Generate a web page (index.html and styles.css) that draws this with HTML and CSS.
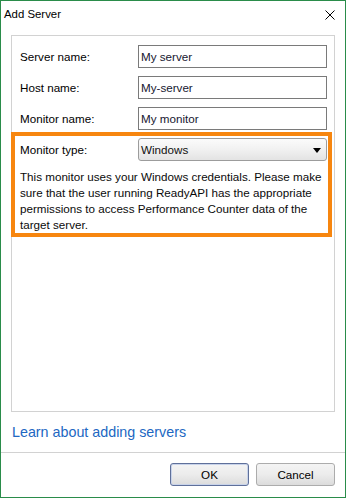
FILE: index.html
```html
<!DOCTYPE html>
<html>
<head>
<meta charset="utf-8">
<link rel="stylesheet" href="styles.css">
</head>
<body>
<div class="window">
  <div class="titlebar">
    <span class="title">Add Server</span>
    <svg class="close" width="10" height="10" viewBox="0 0 10 10"><path d="M0.5 0.5 L9.5 9.5 M9.5 0.5 L0.5 9.5" stroke="#000" stroke-width="1" fill="none"/></svg>
  </div>
  <div class="panel">
    <div class="row">
      <label class="label">Server name:</label>
      <input class="field" type="text" value="My server">
    </div>
    <div class="row">
      <label class="label">Host name:</label>
      <input class="field" type="text" value="My-server">
    </div>
    <div class="row">
      <label class="label">Monitor name:</label>
      <input class="field" type="text" value="My monitor">
    </div>
    <div class="highlight">
      <div class="row">
        <label class="label">Monitor type:</label>
        <div class="select">
          <span>Windows</span>
          <svg class="arrow" width="8" height="5" viewBox="0 0 8 5"><path d="M0 0 H8 L4 5 Z" fill="#000"/></svg>
        </div>
      </div>
      <p class="desc">This monitor uses your Windows credentials. Please make sure that the user running ReadyAPI has the appropriate permissions to access Performance Counter data of the target server.</p>
    </div>
  </div>
  <div class="linkrow">
    <a class="link" href="#">Learn about adding servers</a>
  </div>
  <div class="footer">
    <button class="btn btn-default">OK</button>
    <button class="btn">Cancel</button>
  </div>
</div>
</body>
</html>
```
FILE: styles.css
```css
html, body {
  margin: 0;
  padding: 0;
  background: #fff;
}
body {
  font-family: "Liberation Sans", Arial, sans-serif;
  font-size: 11.65px;
  color: #000;
}
.window {
  width: 346px;
  height: 498px;
  box-sizing: border-box;
  border: 1px solid #2a8c4a;
  display: flex;
  flex-direction: column;
  background: #fff;
}
.titlebar {
  height: 34px;
  box-sizing: border-box;
  display: flex;
  justify-content: space-between;
  align-items: flex-start;
  padding: 6px 10px 0 3px;
  flex: none;
}
.title {
  font-size: 11.4px;
  line-height: 14px;
}
.close {
  margin-top: 3px;
  display: block;
}
.panel {
  margin: 0 10px;
  height: 377px;
  box-sizing: border-box;
  border: 1px solid #d2d2d2;
  padding: 9px 7px 0 8px;
  display: flex;
  flex-direction: column;
  gap: 8px;
  flex: none;
}
.row {
  display: grid;
  grid-template-columns: 118px 189px;
  align-items: center;
  height: 23px;
}
.label {
  line-height: 14px;
}
.field {
  height: 23px;
  width: 189px;
  box-sizing: border-box;
  border: 1px solid #7a7a7a;
  padding: 0 2px;
  margin: 0;
  font-family: inherit;
  font-size: 11.65px;
  color: #161630;
  background: #fff;
  outline: none;
}
.highlight {
  margin: -6px -5px 0 -9px;
  border: 4px solid #f7860f;
  padding: 2px 1px 0 5px;
}
.select {
  height: 23px;
  width: 189px;
  box-sizing: border-box;
  border: 1px solid #9c9c9c;
  border-radius: 3px;
  background: linear-gradient(#fbfbfb, #f1f1f1 50%, #e3e3e3);
  display: flex;
  align-items: center;
  justify-content: space-between;
  padding: 0 3px 0 2px;
  color: #101010;
}
.arrow {
  display: block;
  margin-right: 2px;
  margin-top: 1px;
}
.desc {
  margin: 8px 0 0 0;
  line-height: 16px;
  color: #0a0a0a;
}
.linkrow {
  height: 40px;
  display: flex;
  align-items: center;
  padding-left: 11px;
  flex: none;
}
.link {
  font-size: 14.3px;
  color: #2167c2;
  text-decoration: none;
}
.footer {
  flex: 1;
  border-top: 1px solid #d2d2d2;
  padding: 10px 10px 0 0;
  display: flex;
  justify-content: flex-end;
  align-items: flex-start;
  gap: 7px;
}
.btn {
  width: 79px;
  height: 23px;
  box-sizing: border-box;
  border: 1px solid #acacac;
  border-radius: 3px;
  background: linear-gradient(#f4f4f4, #ececec 50%, #dcdcdc);
  font-family: inherit;
  font-size: 11.65px;
  color: #000;
  padding: 0;
  margin: 0;
}
.btn-default {
  border-color: #5f709a;
  box-shadow: inset 0 0 0 1px #c8d3ea;
}
```
